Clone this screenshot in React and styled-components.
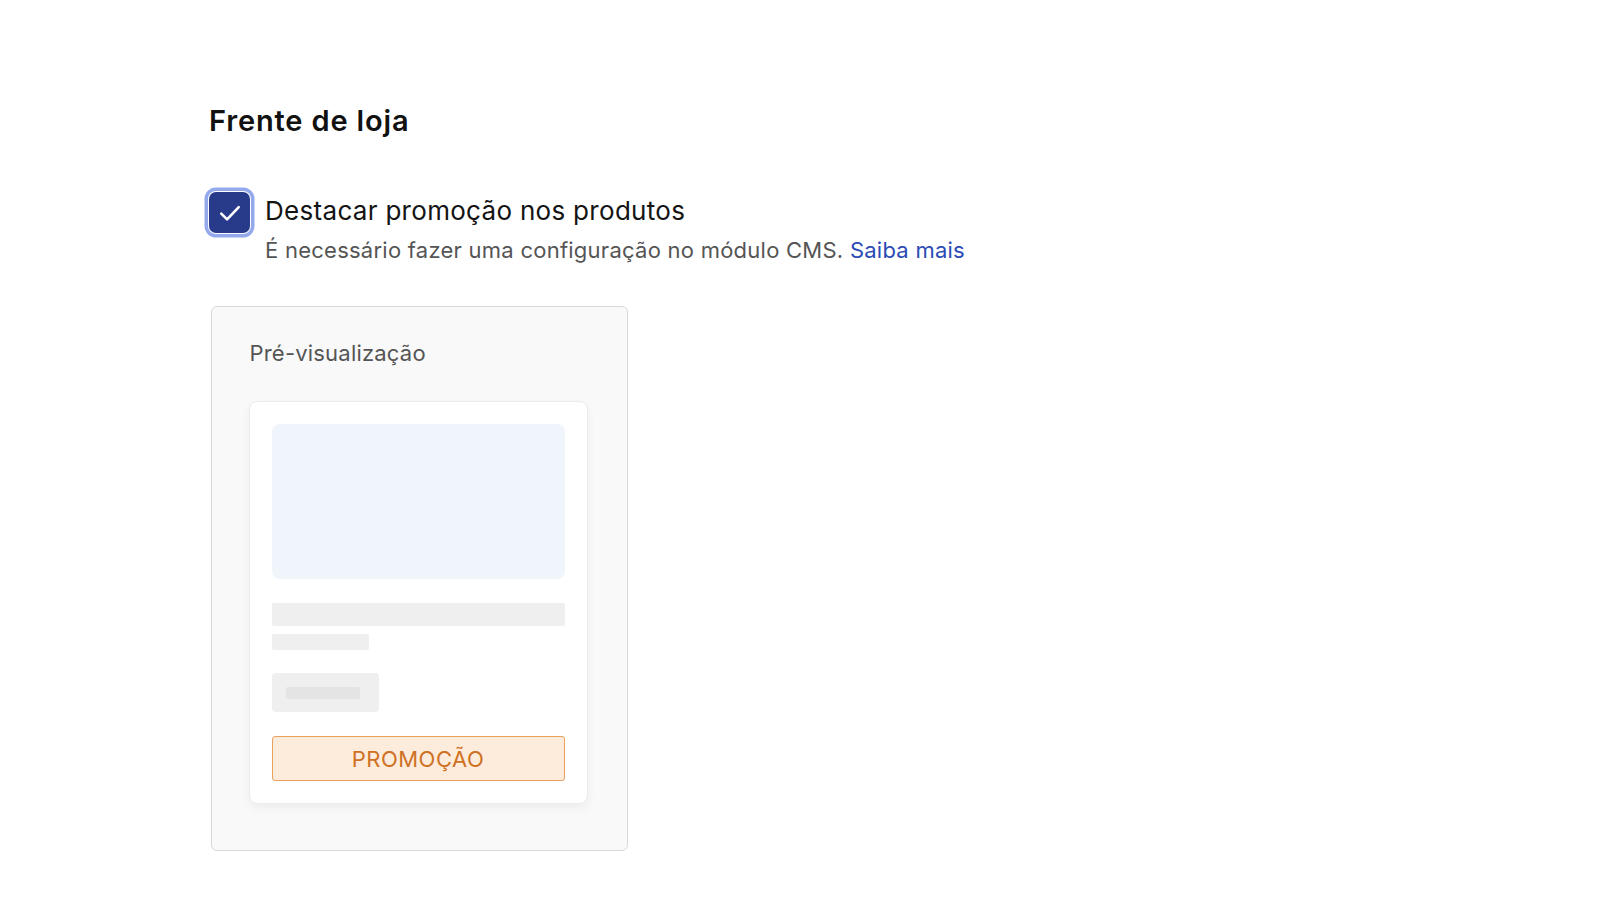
import React from 'react';
import styled, { createGlobalStyle } from 'styled-components';

const GlobalStyle = createGlobalStyle`
  body {
    margin: 0;
    background: #ffffff;
    font-family: Inter, "Noto Sans", sans-serif;
    color: #111;
  }
`;

const Page = styled.div`
  padding: 101px 0 0 209px;
`;

const Title = styled.h2`
  margin: 0;
  font-size: 29px;
  font-weight: 600;
  line-height: 40px;
  letter-spacing: 0.85px;
  color: #111;
`;

const OptionRow = styled.div`
  display: flex;
  align-items: flex-start;
  gap: 15px;
  margin-top: 51px;
`;

const Check = styled.span`
  flex: none;
  width: 41px;
  height: 41px;
  box-sizing: border-box;
  border-radius: 7px;
  background: #283b8b;
  box-shadow: 0 0 0 1px #ffffff, 0 0 0 4.5px #94a9ec;
  display: flex;
  align-items: center;
  justify-content: center;
`;

const OptionText = styled.div`
  display: flex;
  flex-direction: column;
  margin-top: 2px;
`;

const Label = styled.div`
  font-size: 26px;
  line-height: 34px;
  letter-spacing: 0.3px;
  color: #141414;
`;

const Hint = styled.div`
  margin-top: 7px;
  font-size: 22px;
  line-height: 30px;
  letter-spacing: 0.25px;
  color: #555;
`;

const Link = styled.a`
  color: #2c4bb5;
  text-decoration: none;
`;

const Preview = styled.div`
  margin: 41px 0 0 2px;
  width: 417px;
  height: 545px;
  box-sizing: border-box;
  border: 1.5px solid #d8d8d8;
  border-radius: 6px;
  background: #f9f9f9;
  padding: 31px 38px 0 36.5px;
`;

const PreviewTitle = styled.div`
  margin-left: 1px;
  font-size: 22px;
  line-height: 30px;
  letter-spacing: 0.2px;
  color: #555;
`;

const ProductCard = styled.div`
  margin-top: 33px;
  width: 339px;
  box-sizing: border-box;
  background: #fff;
  border: 1px solid #ececec;
  border-radius: 8px;
  box-shadow: 0 4px 10px rgba(0, 0, 0, 0.05);
  padding: 22px;
  display: flex;
  flex-direction: column;
`;

const ImageBox = styled.div`
  height: 155px;
  border-radius: 8px;
  background: #f0f4fb;
`;

const Bar = styled.div`
  height: ${(p) => p.h}px;
  width: ${(p) => p.w};
  margin-top: ${(p) => p.mt}px;
  background: #efefef;
  border-radius: 2px;
`;

const FakeButton = styled.div`
  margin-top: 23px;
  width: 107px;
  height: 39px;
  border-radius: 4px;
  background: #efefef;
  display: flex;
  align-items: center;
  padding-left: 14px;
  box-sizing: border-box;
`;

const FakeButtonText = styled.span`
  width: 74px;
  height: 12px;
  border-radius: 2px;
  background: #e4e4e4;
`;

const Promo = styled.div`
  margin-top: 24px;
  height: 45px;
  box-sizing: border-box;
  border: 1.5px solid #e9a15c;
  border-radius: 3px;
  background: #fdecdb;
  color: #cf7125;
  font-size: 22px;
  display: flex;
  align-items: center;
  justify-content: center;
  letter-spacing: 0.5px;
`;

export default function App() {
  return (
    <>
      <GlobalStyle />
      <Page>
        <Title>Frente de loja</Title>
        <OptionRow>
          <Check>
            <svg width="28" height="28" viewBox="0 0 24 24" fill="none">
              <path d="M4.5 12.5l5 5L19.5 7" stroke="#fff" strokeWidth="2.2" strokeLinecap="round" strokeLinejoin="round" />
            </svg>
          </Check>
          <OptionText>
            <Label>Destacar promoção nos produtos</Label>
            <Hint>
              É necessário fazer uma configuração no módulo CMS. <Link href="#">Saiba mais</Link>
            </Hint>
          </OptionText>
        </OptionRow>
        <Preview>
          <PreviewTitle>Pré-visualização</PreviewTitle>
          <ProductCard>
            <ImageBox />
            <Bar h={23} w="100%" mt={24} />
            <Bar h={16} w="97px" mt={8} />
            <FakeButton>
              <FakeButtonText />
            </FakeButton>
            <Promo>PROMOÇÃO</Promo>
          </ProductCard>
        </Preview>
      </Page>
    </>
  );
}
